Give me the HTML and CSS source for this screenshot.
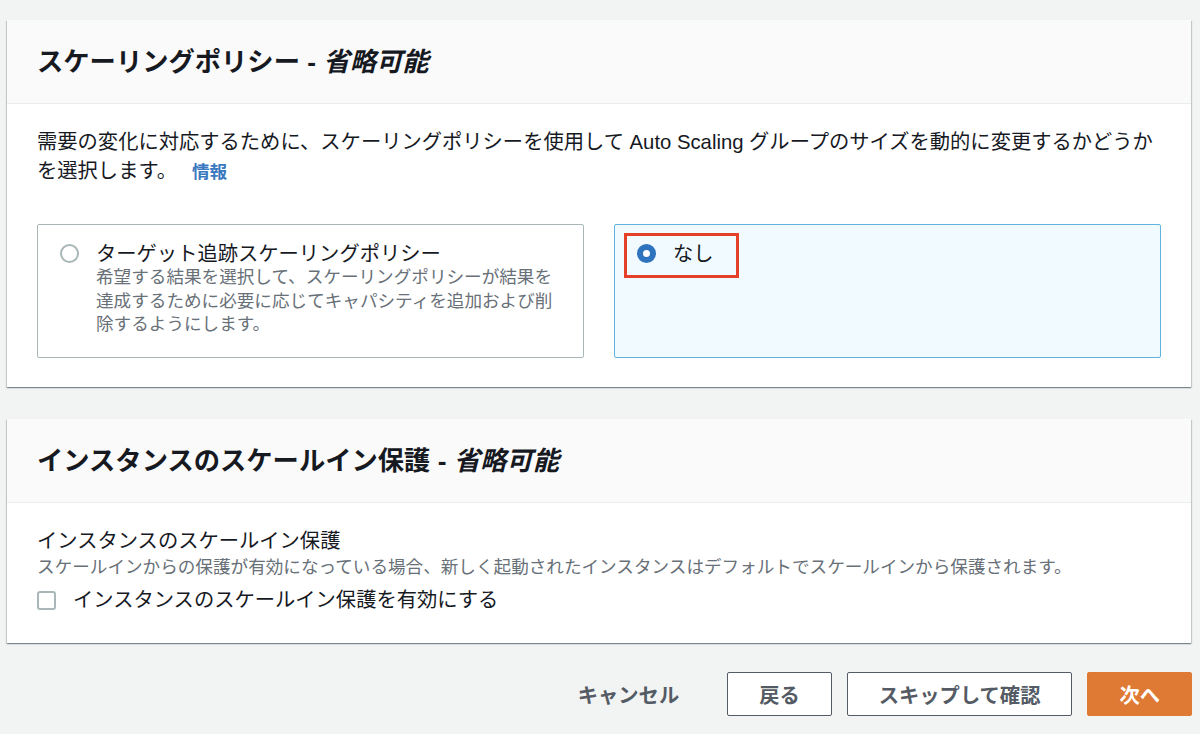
FILE: index.html
```html
<!DOCTYPE html>
<html lang="ja">
<head>
    <meta charset="UTF-8">
    <title>Auto Scaling グループ</title>
    <link rel="stylesheet" href="styles.css">
</head>
<body>

<div class="page">

    <div class="card">
        <div class="card_header">
            <h2 class="card_title">スケーリングポリシー - <i>省略可能</i></h2>
        </div>
        <div class="card_body">
            <p class="card_desc">需要の変化に対応するために、スケーリングポリシーを使用して Auto Scaling グループのサイズを動的に変更するかどうかを選択します。<a class="info-link" href="#">情報</a></p>

            <div class="tiles">
                <div class="tile">
                    <div class="tile_row">
                        <span class="radio"></span>
                        <div>
                            <div class="tile_label">ターゲット追跡スケーリングポリシー</div>
                            <div class="tile_desc">希望する結果を選択して、スケーリングポリシーが結果を達成するために必要に応じてキャパシティを追加および削除するようにします。</div>
                        </div>
                    </div>
                </div>
                <div class="tile selected">
                    <div class="tile_row highlight">
                        <span class="radio checked"></span>
                        <div class="tile_label">なし</div>
                    </div>
                </div>
            </div>
        </div>
    </div>

    <div class="card">
        <div class="card_header">
            <h2 class="card_title">インスタンスのスケールイン保護 - <i>省略可能</i></h2>
        </div>
        <div class="card_body card_body--field">
            <div class="field_label">インスタンスのスケールイン保護</div>
            <div class="field_desc">スケールインからの保護が有効になっている場合、新しく起動されたインスタンスはデフォルトでスケールインから保護されます。</div>
            <label class="checkbox-row">
                <span class="checkbox"></span>
                インスタンスのスケールイン保護を有効にする
            </label>
        </div>
    </div>

    <div class="actions">
        <button class="btn btn-link">キャンセル</button>
        <button class="btn">戻る</button>
        <button class="btn">スキップして確認</button>
        <button class="btn btn-primary">次へ</button>
    </div>

</div>

</body>
</html>
```

FILE: styles.css
```css
body {
    margin: 0;
    background: #f2f3f3;
    font-family: "Liberation Sans", "Noto Sans CJK JP", sans-serif;
    color: #16191f;
    font-size: 20.3px;
    line-height: 29px;
}

.page {
    padding: 20px 8px 0 7px;
}

.card {
    background: #fff;
    box-shadow: 0 1px 1px 0 rgba(0, 28, 36, 0.3), 1px 1px 1px 0 rgba(0, 28, 36, 0.15), -1px 1px 1px 0 rgba(0, 28, 36, 0.15);
    margin-bottom: 32px;
    margin-right: 1px;
}

.card_header {
    background: #fafafa;
    border-bottom: 1px solid #eaeded;
    padding: 24px 30px 23px;
}

.card_title {
    margin: 0;
    font-size: 26.3px;
    line-height: 36px;
    font-weight: bold;
}

.card_title i {
    font-style: italic;
}

.card_body {
    padding: 24px 30px 29px;
}

.card_body--field {
    padding: 24px 30px 28px;
}

.card_desc {
    margin: 0;
    max-width: 1124px;
}

.info-link {
    color: #3a78c0;
    font-size: 17.6px;
    font-weight: bold;
    text-decoration: none;
    margin-left: 15px;
}

.tiles {
    display: grid;
    grid-template-columns: 1fr 1fr;
    gap: 30px;
    margin-top: 37px;
}

.tile {
    border: 1px solid #aab7b8;
    border-radius: 2px;
    padding: 17px 22px 20px 22px;
}

.tile.selected {
    background: #f1faff;
    border-color: #5fb3dc;
}

.tile_row {
    display: flex;
    align-items: flex-start;
}

.tile_label {
    line-height: 24px;
}

.highlight {
    display: inline-flex;
    margin: -9px 0 0 -13px;
    padding: 6px 22px 9px 10px;
    border: 3px solid #e5402a;
}

.radio {
    flex: none;
    width: 19px;
    height: 19px;
    box-sizing: border-box;
    border: 2px solid #aab7b8;
    border-radius: 50%;
    background: #fff;
    margin: 2px 17px 0 0;
}

.radio.checked {
    border: 6px solid #2e73bd;
}

.tile_desc {
    font-size: 17.6px;
    line-height: 23.5px;
    color: #687078;
}

.field_desc {
    font-size: 17.6px;
    line-height: 23px;
    color: #687078;
}

.checkbox-row {
    display: flex;
    align-items: center;
    margin-top: 7px;
}

.checkbox {
    width: 19px;
    height: 19px;
    box-sizing: border-box;
    border: 2px solid #aab7b8;
    border-radius: 3px;
    background: #fff;
    margin-right: 17px;
}

.actions {
    display: flex;
    justify-content: flex-end;
    align-items: center;
    gap: 15px;
    margin-top: -3px;
}

.btn {
    font-family: inherit;
    font-size: 20.3px;
    font-weight: bold;
    height: 44px;
    padding: 0 31px;
    background: #fff;
    color: #545b64;
    border: 1px solid #545b64;
    border-radius: 2px;
}

.btn-link {
    padding: 0;
    border-color: transparent;
    background: transparent;
    margin-right: 32px;
}

.btn-primary {
    background: #df7a35;
    border-color: #df7a35;
    color: #fff;
    min-width: 103px;
}
```
